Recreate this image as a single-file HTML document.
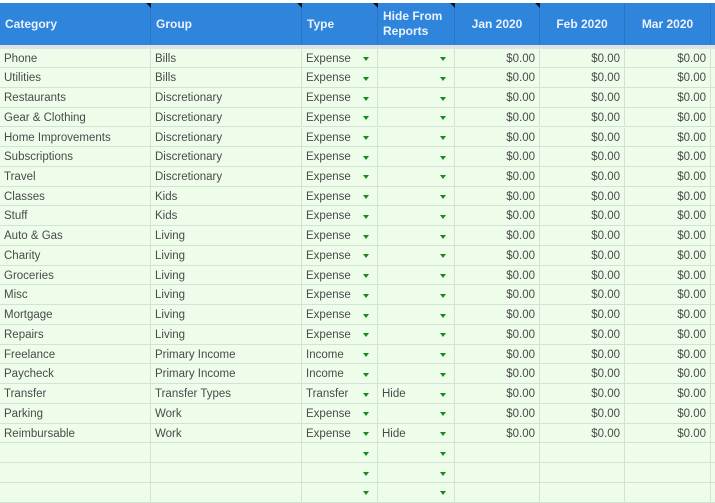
<!DOCTYPE html>
<html><head><meta charset="utf-8"><style>
*{margin:0;padding:0;box-sizing:border-box}
body{width:715px;height:503px;overflow:hidden;background:#eefcea;font-family:"Liberation Sans",sans-serif;position:relative}
.top{position:absolute;left:0;top:0;width:715px;height:3px;background:#fff}
.hdr{position:absolute;left:0;top:3px;width:715px;height:42px;background:#2f84dc}
.band{position:absolute;left:0;top:45px;width:715px;height:3.5px;background:#dfe3e6}
.h{position:absolute;top:3px;height:42px;color:#eaf2fb;font-size:12px;font-weight:bold;display:flex;align-items:center;border-right:1px solid #2a74c2}
.h.l{padding-left:5px}.h.r{justify-content:center}
.corner{position:absolute;top:3px;width:0;height:0;border-top:5px solid #111;border-left:5px solid transparent}
.row{position:absolute;left:0;width:715px;height:19.74px;border-bottom:1px solid #d3e3d3}
.c{position:absolute;top:0;height:100%;border-right:1px solid #d3e3d3;font-size:11.5px;color:#4a4a4a;line-height:20.5px;padding-left:4px;white-space:nowrap}
.c1{left:0;width:151px}.c2{left:151px;width:151px}.c3{left:302px;width:76px}.c4{left:378px;width:77px}
.c5{left:455px;width:85px}.c6{left:540px;width:85px}.c7{left:625px;width:86px}
.m{text-align:right;padding-right:4px;padding-left:0}
.t{position:absolute;top:8.5px;width:0;height:0;border-top:4px solid #1a8a1a;border-left:3.5px solid transparent;border-right:3.5px solid transparent}
.c3 .t{left:61px}.c4 .t{left:62px}
</style></head><body>
<div class="top"></div>
<div class="hdr"></div>
<div class="band"></div>
<div class="h l" style="left:0;width:151px">Category</div>
<div class="h l" style="left:151px;width:151px">Group</div>
<div class="h l" style="left:302px;width:76px">Type</div>
<div class="h l" style="left:378px;width:77px;line-height:15px">Hide From<br>Reports</div>
<div class="h r" style="left:455px;width:85px">Jan 2020</div>
<div class="h r" style="left:540px;width:85px">Feb 2020</div>
<div class="h r" style="left:625px;width:86px">Mar 2020</div>
<div class="corner" style="left:146px"></div>
<div class="corner" style="left:297px"></div>
<div class="corner" style="left:373px"></div>
<div class="corner" style="left:450px"></div>
<div class="corner" style="left:535px"></div>

<div class="row" style="top:48.5px"><div class="c c1">Phone</div><div class="c c2">Bills</div><div class="c c3">Expense<i class="t"></i></div><div class="c c4"><i class="t"></i></div><div class="c c5 m">$0.00</div><div class="c c6 m">$0.00</div><div class="c c7 m">$0.00</div></div>
<div class="row" style="top:68.2px"><div class="c c1">Utilities</div><div class="c c2">Bills</div><div class="c c3">Expense<i class="t"></i></div><div class="c c4"><i class="t"></i></div><div class="c c5 m">$0.00</div><div class="c c6 m">$0.00</div><div class="c c7 m">$0.00</div></div>
<div class="row" style="top:88.0px"><div class="c c1">Restaurants</div><div class="c c2">Discretionary</div><div class="c c3">Expense<i class="t"></i></div><div class="c c4"><i class="t"></i></div><div class="c c5 m">$0.00</div><div class="c c6 m">$0.00</div><div class="c c7 m">$0.00</div></div>
<div class="row" style="top:107.7px"><div class="c c1">Gear &amp; Clothing</div><div class="c c2">Discretionary</div><div class="c c3">Expense<i class="t"></i></div><div class="c c4"><i class="t"></i></div><div class="c c5 m">$0.00</div><div class="c c6 m">$0.00</div><div class="c c7 m">$0.00</div></div>
<div class="row" style="top:127.5px"><div class="c c1">Home Improvements</div><div class="c c2">Discretionary</div><div class="c c3">Expense<i class="t"></i></div><div class="c c4"><i class="t"></i></div><div class="c c5 m">$0.00</div><div class="c c6 m">$0.00</div><div class="c c7 m">$0.00</div></div>
<div class="row" style="top:147.2px"><div class="c c1">Subscriptions</div><div class="c c2">Discretionary</div><div class="c c3">Expense<i class="t"></i></div><div class="c c4"><i class="t"></i></div><div class="c c5 m">$0.00</div><div class="c c6 m">$0.00</div><div class="c c7 m">$0.00</div></div>
<div class="row" style="top:166.9px"><div class="c c1">Travel</div><div class="c c2">Discretionary</div><div class="c c3">Expense<i class="t"></i></div><div class="c c4"><i class="t"></i></div><div class="c c5 m">$0.00</div><div class="c c6 m">$0.00</div><div class="c c7 m">$0.00</div></div>
<div class="row" style="top:186.7px"><div class="c c1">Classes</div><div class="c c2">Kids</div><div class="c c3">Expense<i class="t"></i></div><div class="c c4"><i class="t"></i></div><div class="c c5 m">$0.00</div><div class="c c6 m">$0.00</div><div class="c c7 m">$0.00</div></div>
<div class="row" style="top:206.4px"><div class="c c1">Stuff</div><div class="c c2">Kids</div><div class="c c3">Expense<i class="t"></i></div><div class="c c4"><i class="t"></i></div><div class="c c5 m">$0.00</div><div class="c c6 m">$0.00</div><div class="c c7 m">$0.00</div></div>
<div class="row" style="top:226.2px"><div class="c c1">Auto &amp; Gas</div><div class="c c2">Living</div><div class="c c3">Expense<i class="t"></i></div><div class="c c4"><i class="t"></i></div><div class="c c5 m">$0.00</div><div class="c c6 m">$0.00</div><div class="c c7 m">$0.00</div></div>
<div class="row" style="top:245.9px"><div class="c c1">Charity</div><div class="c c2">Living</div><div class="c c3">Expense<i class="t"></i></div><div class="c c4"><i class="t"></i></div><div class="c c5 m">$0.00</div><div class="c c6 m">$0.00</div><div class="c c7 m">$0.00</div></div>
<div class="row" style="top:265.6px"><div class="c c1">Groceries</div><div class="c c2">Living</div><div class="c c3">Expense<i class="t"></i></div><div class="c c4"><i class="t"></i></div><div class="c c5 m">$0.00</div><div class="c c6 m">$0.00</div><div class="c c7 m">$0.00</div></div>
<div class="row" style="top:285.4px"><div class="c c1">Misc</div><div class="c c2">Living</div><div class="c c3">Expense<i class="t"></i></div><div class="c c4"><i class="t"></i></div><div class="c c5 m">$0.00</div><div class="c c6 m">$0.00</div><div class="c c7 m">$0.00</div></div>
<div class="row" style="top:305.1px"><div class="c c1">Mortgage</div><div class="c c2">Living</div><div class="c c3">Expense<i class="t"></i></div><div class="c c4"><i class="t"></i></div><div class="c c5 m">$0.00</div><div class="c c6 m">$0.00</div><div class="c c7 m">$0.00</div></div>
<div class="row" style="top:324.9px"><div class="c c1">Repairs</div><div class="c c2">Living</div><div class="c c3">Expense<i class="t"></i></div><div class="c c4"><i class="t"></i></div><div class="c c5 m">$0.00</div><div class="c c6 m">$0.00</div><div class="c c7 m">$0.00</div></div>
<div class="row" style="top:344.6px"><div class="c c1">Freelance</div><div class="c c2">Primary Income</div><div class="c c3">Income<i class="t"></i></div><div class="c c4"><i class="t"></i></div><div class="c c5 m">$0.00</div><div class="c c6 m">$0.00</div><div class="c c7 m">$0.00</div></div>
<div class="row" style="top:364.3px"><div class="c c1">Paycheck</div><div class="c c2">Primary Income</div><div class="c c3">Income<i class="t"></i></div><div class="c c4"><i class="t"></i></div><div class="c c5 m">$0.00</div><div class="c c6 m">$0.00</div><div class="c c7 m">$0.00</div></div>
<div class="row" style="top:384.1px"><div class="c c1">Transfer</div><div class="c c2">Transfer Types</div><div class="c c3">Transfer<i class="t"></i></div><div class="c c4">Hide<i class="t"></i></div><div class="c c5 m">$0.00</div><div class="c c6 m">$0.00</div><div class="c c7 m">$0.00</div></div>
<div class="row" style="top:403.8px"><div class="c c1">Parking</div><div class="c c2">Work</div><div class="c c3">Expense<i class="t"></i></div><div class="c c4"><i class="t"></i></div><div class="c c5 m">$0.00</div><div class="c c6 m">$0.00</div><div class="c c7 m">$0.00</div></div>
<div class="row" style="top:423.6px"><div class="c c1">Reimbursable</div><div class="c c2">Work</div><div class="c c3">Expense<i class="t"></i></div><div class="c c4">Hide<i class="t"></i></div><div class="c c5 m">$0.00</div><div class="c c6 m">$0.00</div><div class="c c7 m">$0.00</div></div>
<div class="row" style="top:443.3px"><div class="c c1"></div><div class="c c2"></div><div class="c c3"><i class="t"></i></div><div class="c c4"><i class="t"></i></div><div class="c c5"></div><div class="c c6"></div><div class="c c7"></div></div>
<div class="row" style="top:463.0px"><div class="c c1"></div><div class="c c2"></div><div class="c c3"><i class="t"></i></div><div class="c c4"><i class="t"></i></div><div class="c c5"></div><div class="c c6"></div><div class="c c7"></div></div>
<div class="row" style="top:482.8px"><div class="c c1"></div><div class="c c2"></div><div class="c c3"><i class="t"></i></div><div class="c c4"><i class="t"></i></div><div class="c c5"></div><div class="c c6"></div><div class="c c7"></div></div>
</body></html>
